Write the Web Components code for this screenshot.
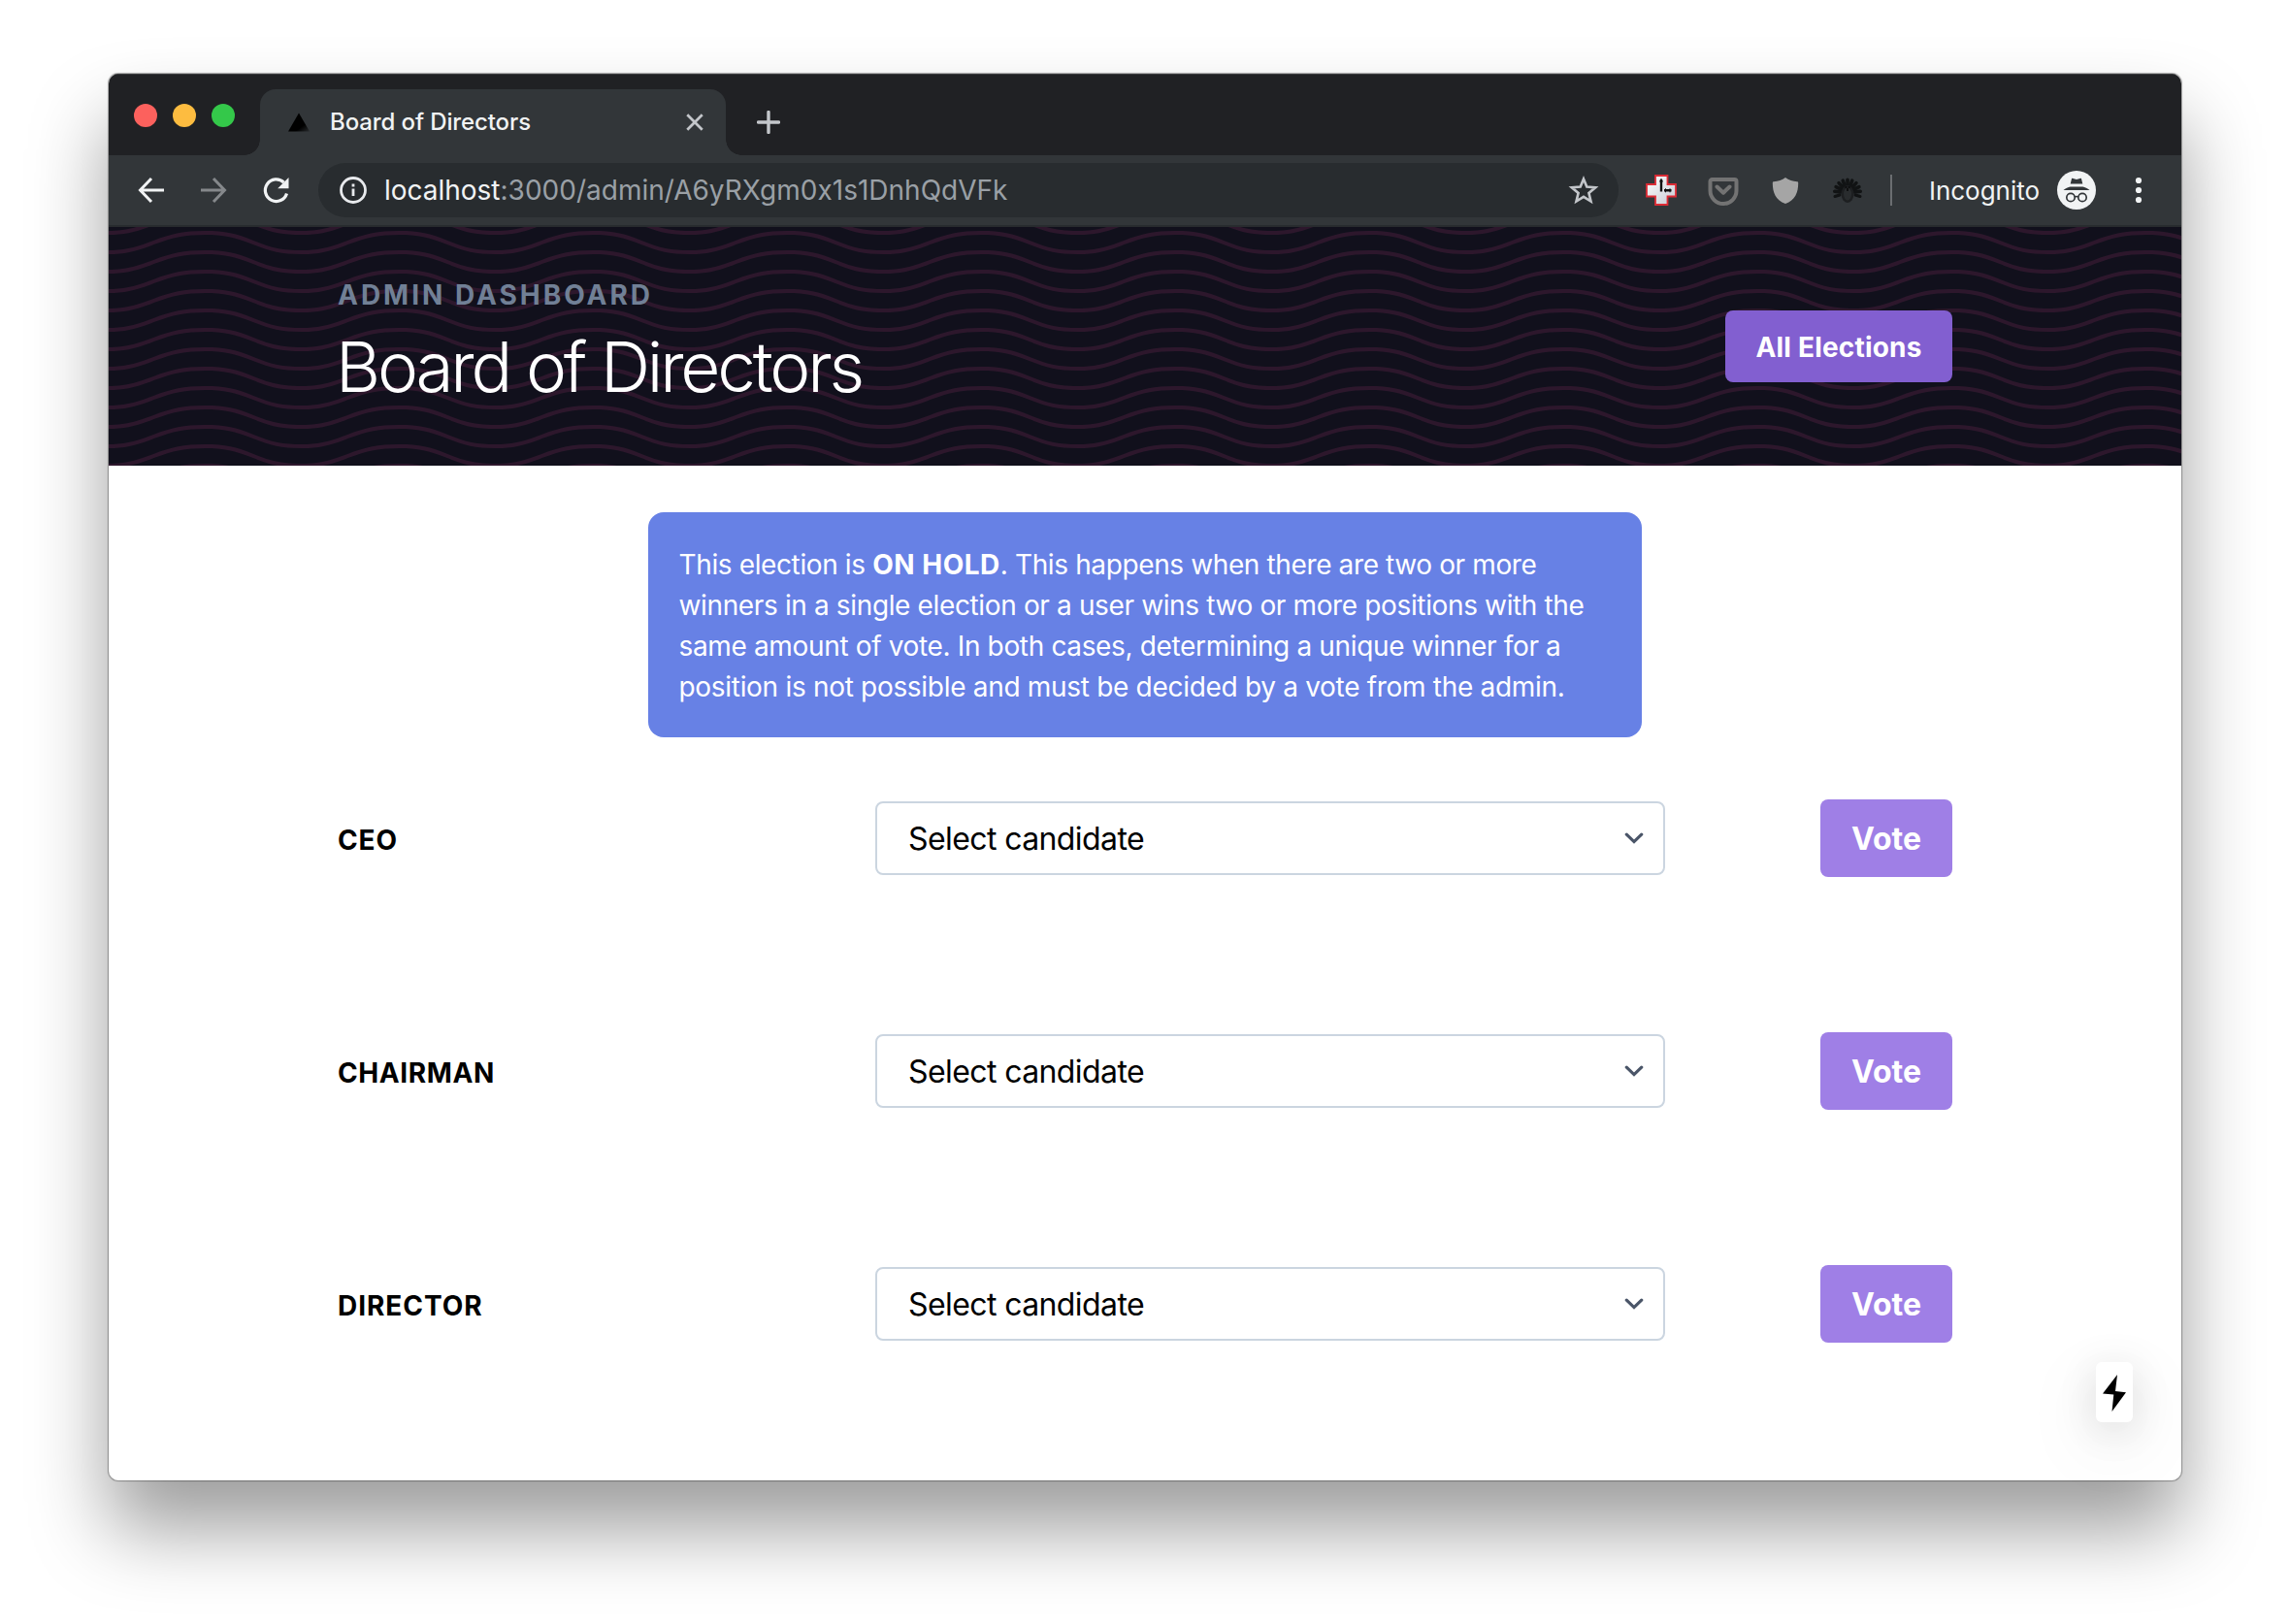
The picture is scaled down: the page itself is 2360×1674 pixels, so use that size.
<!DOCTYPE html>
<html lang="en">
<head>
<meta charset="utf-8">
<title>Board of Directors</title>
<style>
  html, body { margin: 0; height: 100%; background: #fff; }
  body { font-family: Inter, "Liberation Sans", sans-serif; font-weight: 430; overflow: hidden; }
</style>
</head>
<body>
<browser-window>
  <tab-strip slot="tabs"><browser-tab>Board of Directors</browser-tab></tab-strip>
  <tool-bar slot="toolbar"></tool-bar>
  <page-header>
    <fit-text slot="eyebrow" span="325">ADMIN DASHBOARD</fit-text>
    <fit-text slot="title" span="542">Board of Directors</fit-text>
    <fit-text slot="action" span="171">All Elections</fit-text>
  </page-header>
  <page-body>
    <info-alert>
      <fit-text span="884">This election is <b>ON HOLD</b>. This happens when there are two or more</fit-text>
      <fit-text span="933">winners in a single election or a user wins two or more positions with the</fit-text>
      <fit-text span="909">same amount of vote. In both cases, determining a unique winner for a</fit-text>
      <fit-text span="913">position is not possible and must be decided by a vote from the admin.</fit-text>
    </info-alert>
    <vote-row><fit-text span="62">CEO</fit-text></vote-row>
    <vote-row><fit-text span="162">CHAIRMAN</fit-text></vote-row>
    <vote-row><fit-text span="149.500">DIRECTOR</fit-text></vote-row>
  </page-body>
  <flash-badge slot="badge"></flash-badge>
</browser-window>

<script>
const define = (name, html, ready) => customElements.define(name, class extends HTMLElement {
  connectedCallback() {
    if (this.shadowRoot) return;
    this.attachShadow({ mode: 'open' }).innerHTML = html;
    if (ready) ready(this);
  }
});

define('browser-window', `
<style>
  :host { display: flex; height: 1674px; box-sizing: border-box; padding: 76px 112px 148px; }
  .win { position: relative; flex: 1; display: flex; flex-direction: column; background: #fff; border-radius: 10px;
    box-shadow: 0 0 1px 1px rgba(0,0,0,.32), 0 50px 80px rgba(0,0,0,.39); }
  .clip { flex: 1; display: flex; flex-direction: column; overflow: hidden; border-radius: 10px; }
</style>
<div class="win"><div class="clip">
  <slot name="tabs"></slot><slot name="toolbar"></slot><slot></slot>
</div><slot name="badge"></slot></div>`);

define('tab-strip', `
<style>
  :host { display: flex; height: 84px; background: #202124; box-shadow: inset 0 1px #3a3b3e; }
  .lights { display: flex; gap: 16px; padding: 31px 26px 0; width: 104px; }
  i { width: 24px; height: 24px; border-radius: 50%; }
  svg { margin: 38px 0 0 32px; }
</style>
<div class="lights"><i style="background:#fc615d"></i><i style="background:#fdbc40"></i><i style="background:#34c84a"></i></div>
<slot></slot>
<svg width="24" height="24" viewBox="0 0 24 24"><path d="M12 1.5v21M1.5 12h21" stroke="#c3c6ca" stroke-width="3.4" stroke-linecap="round"/></svg>`);

define('browser-tab', `
<style>
  :host { position: relative; display: flex; align-items: center; width: 480px; height: 68px; margin-top: 16px; box-sizing: border-box;
    padding: 0 23px 0 28px; background: #323639; border-radius: 16px 16px 0 0; color: #f1f3f4; font-size: 24px; }
  :host::before, :host::after { content: ""; position: absolute; bottom: 0; width: 16px; height: 16px; }
  :host::before { left: -16px; background: radial-gradient(circle at 0 0, transparent 15.5px, #323639 16px); }
  :host::after { right: -16px; background: radial-gradient(circle at 100% 0, transparent 15.5px, #323639 16px); }
  fit-text { flex: 1; margin-left: 20px; padding-bottom: 2px; font-weight: 450; }
</style>
<svg width="24" height="24" viewBox="0 0 24 24"><defs><linearGradient id="g" x1=".5" y1=".4" x2="1" y2="1"><stop offset=".45" stop-color="#000"/><stop offset="1" stop-color="#000" stop-opacity=".2"/></linearGradient></defs><path d="M12 2.500 23 21.500H1z" fill="url(#g)"/></svg>
<fit-text span="207"></fit-text>
<svg width="18" height="18" viewBox="0 0 17 17"><path d="M1.200 1.200l14.600 14.600M15.800 1.200 1.200 15.800" stroke="#c3c6ca" stroke-width="2.600"/></svg>`,
  el => { el.shadowRoot.querySelector('fit-text').textContent = el.textContent; });

/* One line of text whose tracking is adjusted so that it spans a given width; bold runs keep their own tracking. */
define('fit-text', `<style>:host { display: flex; } span { flex: none; white-space: nowrap; } ::slotted(b) { letter-spacing: .5px; }</style><span><slot></slot></span>`,
  el => requestAnimationFrame(() => {
    const box = el.shadowRoot.querySelector('span');
    const bold = el.querySelector('b');
    const n = el.textContent.length - (bold ? bold.textContent.length : 0);
    if (n) box.style.letterSpacing = ((+el.getAttribute('span') - box.getBoundingClientRect().width) / n).toFixed(4) + 'px';
  }));

define('tool-bar', `
<style>
  :host { display: flex; align-items: center; height: 74px; box-sizing: border-box; padding: 0 30px 0 28px; background: #323639;
    border-bottom: 2px solid #282b2e; color: #f1f3f4; }
  svg { display: block; flex: none; }
  .omni { display: flex; align-items: center; width: 1340px; height: 56px; border-radius: 28px; background: #282c2f; box-sizing: border-box;
    padding: 0 20px 0 20px; margin-left: 27px; font-size: 28px; }
  .rest { color: #9aa0a6; flex: 1; }
  .host { margin-left: 16px; }
  .sep { width: 2px; height: 32px; background: #6b6e71; margin-left: 28px; }
  .inc { font-size: 26px; margin: 0 18px 0 38px; }
</style>
<svg width="32" height="32" viewBox="0 0 32 32"><path d="M29 16H5M16 4 4.500 16 16 28" fill="none" stroke="#f1f3f4" stroke-width="3"/></svg>
<svg style="margin-left:32px" width="32" height="32" viewBox="0 0 32 32"><path d="M3 16h24M16 4l11.500 12L16 28" fill="none" stroke="#85888b" stroke-width="3"/></svg>
<svg style="margin-left:33px" width="32" height="32" viewBox="0 0 32 32"><path d="M26.500 19.500A11.300 11.300 0 1 1 23.500 8" fill="none" stroke="#f1f3f4" stroke-width="3.200"/><path d="M28.500 3v11.300H17.200z" fill="#f1f3f4"/></svg>
<div class="omni">
  <svg width="32" height="32" viewBox="0 0 32 32"><circle cx="16" cy="16" r="12.500" fill="none" stroke="#e8eaed" stroke-width="2.800"/><path d="M16 14.500v7.500M16 9.500v3" stroke="#e8eaed" stroke-width="2.800"/></svg>
  <fit-text class="host" span="119.500">localhost</fit-text><fit-text class="rest" span="523">:3000/admin/A6yRXgm0x1s1DnhQdVFk</fit-text>
  <svg width="32" height="32" viewBox="0 0 32 32"><path d="M16 4.500 19.300 12.500 28.200 13.200 21.400 18.900 23.500 27.500 16 22.900 8.500 27.500 10.600 18.900 3.800 13.200 12.700 12.500z" fill="none" stroke="#c3c6ca" stroke-width="2.600"/></svg>
</div>
<svg style="margin-left:28px" width="32" height="32" viewBox="0 0 32 32"><defs><linearGradient id="c" x2="1" y2="1"><stop stop-color="#fff"/><stop offset="1" stop-color="#c5c9d3"/></linearGradient></defs><path d="M10 1h12.500v9H31v12.500h-8.500V31H10v-8.500H1V10h9z" fill="url(#c)" stroke="#dc2b35" stroke-width="1.800"/><path d="M16 5v12.500M19 16.300h7.500" stroke="#111" stroke-width="2.400"/><path d="M14 7.500 16 3.500 18 7.500z" fill="#111"/><path d="M20.500 14.300v4M25 14.300v4" stroke="#111" stroke-width="1"/></svg>
<svg style="margin-left:32px" width="32" height="32" viewBox="0 0 32 32"><path d="M4.500 5h23a2 2 0 0 1 2 2V16.500a13.500 13.500 0 0 1-27 0V7a2 2 0 0 1 2-2z" fill="none" stroke="#737373" stroke-width="4"/><path d="M9.500 12.500 16 18.700 22.500 12.500" fill="none" stroke="#737373" stroke-width="4" stroke-linecap="round" stroke-linejoin="round"/></svg>
<svg style="margin-left:32px" width="32" height="32" viewBox="0 0 32 32"><path d="M16 3c3.500 2.800 7.500 3.800 12 4.200 1 0 1.200.6 1.200 1.500 0 10-3.200 17.300-13.200 21.300C6 26 2.800 18.700 2.800 8.700c0-.9.200-1.500 1.200-1.500C8.500 6.800 12.500 5.800 16 3z" fill="#a5a5a5"/></svg>
<svg class="tk" style="margin-left:32px" width="32" height="32" viewBox="0 0 32 32"><g stroke="#111314" stroke-linecap="round"></g><ellipse cx="16" cy="20" rx="6.500" ry="9" fill="#1d1f21"/><ellipse cx="16" cy="20" rx="4" ry="6.500" fill="#292c2e"/><path d="M13.500 13h1.800M16.800 13h1.800M16 14v3" stroke="#0c0d0e" stroke-width="1.800"/></svg>
<div class="sep"></div>
<fit-text class="inc" span="114">Incognito</fit-text>
<svg width="40" height="40" viewBox="0 0 40 40"><circle cx="20" cy="20" r="20" fill="#f1f3f4"/><path d="M15 8.300c.3-.5.900-.6 1.400-.4l3.600 1 3.600-1c.5-.2 1.100-.1 1.400.4l1.300 5.200H13.700zM6.500 20c2-1.900 5-3.200 7-3.600h13c2 .4 5 1.700 7 3.600z" fill="#323639"/><circle cx="14" cy="27.500" r="4.200" fill="none" stroke="#323639" stroke-width="1.700"/><circle cx="26" cy="27.500" r="4.200" fill="none" stroke="#323639" stroke-width="1.700"/><path d="M18 27.200q2-1.400 4 0" fill="none" stroke="#323639" stroke-width="1.700"/></svg>
<svg style="margin-left:40px" width="8" height="28" viewBox="0 0 8 28"><g fill="#f1f3f4"><circle cx="4" cy="4" r="3.100"/><circle cx="4" cy="14" r="3.100"/><circle cx="4" cy="24" r="3.100"/></g></svg>`,
  el => {
    /* tail feathers of the turkey icon, fanned round its body */
    let feathers = '';
    for (let i = 0; i < 9; i++) {
      const a = Math.PI * (1.03 + i * 0.1175);
      const x = Math.cos(a), y = Math.sin(a);
      feathers += `<path d="M${16 + 7 * x} ${18.5 + 7 * y}L${16 + 13.3 * x} ${18.5 + 13.3 * y}" stroke-width="3.600"/>`;
    }
    feathers += '<path d="M3 22.500 8 21M29 22.500 24 21" stroke-width="3"/>';
    el.shadowRoot.querySelector('.tk g').innerHTML = feathers;
  });

define('page-header', `
<style>
  :host { position: relative; display: flex; align-items: center; justify-content: space-between; height: 246px; box-sizing: border-box;
    padding: 0 236px; background: #11101c; }
  .waves { position: absolute; inset: 0; width: 100%; height: 100%; }
  .titles, .btn { position: relative; }
  .titles { display: flex; flex-direction: column; gap: 8px; padding-bottom: 8px; }
  .eyebrow { font-weight: 700; font-size: 28px; line-height: 42px; color: #718096; }
  .title { font-weight: 350; font-size: 71px; line-height: 91px; margin: 0 0 -1px -2px; color: #fff; }
  .btn { display: flex; justify-content: center; width: 234px; height: 74px; border-radius: 8px; background: #825fd0; color: #fff;
    font-weight: 700; font-size: 28px; line-height: 77px; }
</style>
<svg class="waves"><defs><pattern id="w" width="100" height="20" patternUnits="userSpaceOnUse" patternTransform="translate(-1 0) scale(2)"><path fill="#2d172c" d="M21.184 20c.357-.13.72-.264 1.088-.402l1.768-.661C33.64 15.347 39.647 14 50 14c10.271 0 15.362 1.222 24.629 4.928.955.383 1.869.74 2.750 1.072h6.225c-2.510-.73-5.139-1.691-8.233-2.928C65.888 13.278 60.562 12 50 12c-10.626 0-16.855 1.397-26.660 5.063l-1.767.662c-2.475.923-4.660 1.674-6.724 2.275h6.335zm0-20C13.258 2.892 8.077 4 0 4V2c5.744 0 9.951-.574 14.850-2h6.334zM77.380 0C85.239 2.966 90.502 4 100 4V2c-6.842 0-11.386-.542-16.396-2h-6.225zM0 14c8.440 0 13.718-1.210 22.272-4.402l1.768-.661C33.640 5.347 39.647 4 50 4c10.271 0 15.362 1.222 24.629 4.928C84.112 12.722 89.438 14 100 14v-2c-10.271 0-15.362-1.222-24.629-4.928C65.888 3.278 60.562 2 50 2 39.374 2 33.145 3.397 23.340 7.063l-1.767.662C13.223 10.840 8.163 12 0 12v2z"/></pattern></defs><rect width="100%" height="100%" fill="url(#w)"/></svg>
<div class="titles"><div class="eyebrow"><slot name="eyebrow"></slot></div><div class="title"><slot name="title"></slot></div></div>
<div class="btn"><slot name="action"></slot></div>`);

define('page-body', `
<style>
  :host { flex: 1; display: flex; flex-direction: column; padding: 48px 236px 0; overflow: hidden; }
</style><slot></slot>`);

define('info-alert', `
<style>
  :host { display: block; width: 1024px; height: 232px; box-sizing: border-box; margin: 0 auto 64px; padding: 33px 32px 31px 31.500px;
    border-radius: 16px; background: #6781e5; color: #fff; font-size: 28px; line-height: 42px; }
</style><slot></slot>`);

define('vote-row', `
<style>
  :host { display: flex; align-items: center; height: 80px; margin-bottom: 160px; color: #000; }
  .label { width: 554px; padding-top: 4px; font-weight: 700; font-size: 28px; line-height: 42px; }
  .select { display: flex; align-items: center; justify-content: space-between; width: 814px; height: 76px; box-sizing: border-box;
    border: 2px solid #cbd5e0; border-radius: 8px; padding: 0 20px 0 32px; font-size: 32px; }
  .vote { display: flex; align-items: center; justify-content: center; width: 136px; height: 80px; margin-left: 160px; border-radius: 8px;
    background: #9f7fe6; color: #fff; font-weight: 700; font-size: 32px; }
</style>
<div class="label"><slot></slot></div>
<div class="select"><fit-text span="243">Select candidate</fit-text>
<svg width="20" height="12" viewBox="0 0 20 12"><path d="M2.300 2.200 10 9.600l7.700-7.400" fill="none" stroke="#4a5568" stroke-width="3.200" stroke-linecap="round"/></svg></div>
<div class="vote"><fit-text span="72">Vote</fit-text></div>`);

define('flash-badge', `
<style>
  :host { position: absolute; right: 50px; bottom: 60px; display: flex; align-items: center; justify-content: center; width: 38px; height: 62px;
    border-radius: 6px; background: #fff; box-shadow: 0 22px 80px rgba(0,0,0,.1), 0 8px 40px rgba(0,0,0,.12); }
  svg { margin-top: 2px; }
</style>
<svg width="24" height="38" viewBox="0 0 24 38"><path d="M15 0 0 19.600l11.300.9L9.500 38 24 18.200l-11-1.300z" fill="#000"/></svg>`);
</script>
</body>
</html>
